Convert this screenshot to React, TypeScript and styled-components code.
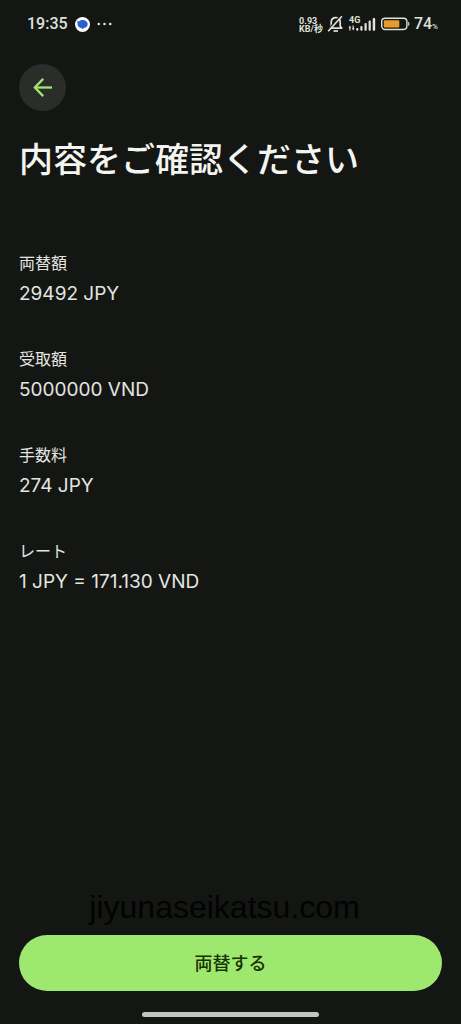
import React from "react";
import styled, { createGlobalStyle } from "styled-components";

const GlobalStyle = createGlobalStyle`
  *, *::before, *::after { box-sizing: border-box; }
  body {
    margin: 0;
    background: #141613;
    color: #e3e5e0;
    font-family: Inter, "Noto Sans CJK JP", sans-serif;
  }
`;

const Screen = styled.div`
  display: flex;
  flex-direction: column;
  min-height: 100vh;
`;

const StatusBar = styled.div`
  display: flex;
  align-items: center;
  justify-content: space-between;
  height: 48px;
  padding: 0 23px 0 27px;
  font-family: Roboto, "Noto Sans CJK JP", sans-serif;
  font-weight: 500;
  color: #dfe1dc;
`;

const StatusSide = styled.div<{ $gap: number }>`
  display: flex;
  align-items: center;
  gap: ${({ $gap }) => $gap}px;
`;

const StatusText = styled.span`
  display: flex;
  align-items: baseline;
  font-size: 16px;
  line-height: 20px;

  small {
    font-size: 8px;
    line-height: 8px;
  }
`;

const NetSpeed = styled.span`
  padding-top: 2px;
  font-size: 9px;
  line-height: 8px;
  font-weight: 700;
  white-space: nowrap;
`;

const SpeedLine = styled.span`
  display: block;
`;

const Main = styled.main`
  flex: 1;
  padding: 16px 19px 0;
`;

const BackButton = styled.button`
  display: flex;
  align-items: center;
  justify-content: center;
  width: 47px;
  height: 47px;
  padding: 0;
  border: 0;
  border-radius: 50%;
  background: #2b2d2a;
  color: #9fe870;
  cursor: pointer;
`;

const Title = styled.h1`
  margin: 24px 0 66px;
  font-size: 34px;
  line-height: 50px;
  font-weight: 500;
  color: #f3f5f0;
`;

const Details = styled.dl`
  display: flex;
  flex-direction: column;
  gap: 38px;
  margin: 0;
`;

const Detail = styled.div`
  display: flex;
  flex-direction: column;
  gap: 4px;
`;

const Label = styled.dt`
  font-size: 16px;
  line-height: 24px;
`;

const Value = styled.dd`
  margin: 0;
  font-size: 19px;
  line-height: 30px;
`;

const Footer = styled.footer`
  display: flex;
  flex-direction: column;
  padding: 0 19px 7px;
`;

const Watermark = styled.p`
  margin: 0;
  padding: 0 12px 8px 0;
  font-family: "Liberation Sans", sans-serif;
  font-size: 32px;
  line-height: 40px;
  text-align: center;
  color: #020302;
`;

const SubmitButton = styled.button`
  height: 56px;
  padding: 2px 0 0;
  border: 0;
  border-radius: 28px;
  background: #9fe870;
  color: #163300;
  font-family: inherit;
  font-size: 18px;
  font-weight: 500;
  line-height: 28px;
  cursor: pointer;
`;

const HomeBar = styled.div`
  align-self: center;
  width: 42%;
  height: 5px;
  margin-top: 21px;
  border-radius: 3px;
  background: #c3c5c0;
`;

const details = [
  { label: "両替額", value: "29492 JPY" },
  { label: "受取額", value: "5000000 VND" },
  { label: "手数料", value: "274 JPY" },
  { label: "レート", value: "1 JPY = 171.130 VND" },
];

const ChatIcon = () => (
  <svg width="15" height="15" viewBox="0 0 15 15" aria-hidden="true">
    <circle cx="7.5" cy="7.5" r="7.5" fill="#fff" />
    <path
      d="M1.900 4.200h2.200C5 3.400 6.200 3 7.500 3c3 0 5.200 1.700 5.200 4.100 0 2.100-1.500 3.600-3.700 4L7.500 12 6 11.100C3.900 10.700 2.600 9.300 2.600 7.300c0-1.200-.1-2-.7-3.100Z"
      fill="#2563cf"
    />
  </svg>
);

const DotsIcon = () => (
  <svg width="15" height="4" viewBox="0 0 15 4" fill="currentColor" aria-hidden="true">
    <circle cx="1.800" cy="2" r="1.300" />
    <circle cx="7.500" cy="2" r="1.300" />
    <circle cx="13.200" cy="2" r="1.300" />
  </svg>
);

const MutedBellIcon = () => (
  <svg
    width="17"
    height="18"
    viewBox="0 0 17 18"
    fill="none"
    stroke="currentColor"
    strokeWidth="1.700"
    aria-hidden="true"
  >
    <path d="M2.700 13.200h12l-1.500-2.200V7.400c0-2.700-1.800-4.700-4.500-4.700S4.200 4.700 4.200 7.400V11Z" strokeLinejoin="round" />
    <path d="M6.500 16h4.500" />
    <path d="M13.500.6 1 14.800" stroke="#141613" strokeWidth="1.500" />
    <path d="M14.900 1.200 1.200 16.200" />
  </svg>
);

const SignalIcon = () => (
  <svg width="28" height="16" viewBox="0 0 28 16" fill="currentColor" aria-hidden="true">
    <text x="1" y="7" fontFamily="Roboto, sans-serif" fontSize="9" fontWeight="700">
      4G
    </text>
    <path d="M1.900 9.500 3.300 11.700H2.500v2.800H1.300v-2.800H.5ZM5.200 14.500 3.800 12.300h.8V9.500h1.200v2.800h.8Z" />
    <rect x="8.200" y="12" width="2.200" height="2.700" rx=".9" />
    <rect x="12.300" y="10" width="2.200" height="4.700" rx=".9" />
    <rect x="16.500" y="7" width="2.200" height="7.700" rx=".9" />
    <rect x="20.600" y="4.500" width="2.200" height="10.200" rx=".9" />
    <rect x="24.700" y="2" width="2.500" height="12.700" rx=".9" />
  </svg>
);

const BatteryIcon = () => (
  <svg width="30" height="14" viewBox="0 0 30 14" aria-hidden="true">
    <rect x="1.700" y="1.200" width="25.200" height="11.300" rx="3.400" fill="none" stroke="currentColor" strokeWidth="1.400" />
    <rect x="3.800" y="3.200" width="15.500" height="7.300" rx="1.200" fill="#e99a2d" />
    <path d="M28.200 4.700c1.600.3 1.600 4 0 4.300Z" fill="currentColor" />
  </svg>
);

const ArrowLeftIcon = () => (
  <svg
    width="20"
    height="20"
    viewBox="0 0 20 20"
    fill="none"
    stroke="currentColor"
    strokeWidth="2.300"
    aria-hidden="true"
  >
    <path d="M19 9.500H2.300" />
    <path d="M10.200.9 1.900 9.500l8.300 8.600" />
  </svg>
);

export default function App() {
  return (
    <Screen>
      <GlobalStyle />
      <StatusBar>
        <StatusSide $gap={7}>
          <StatusText>19:35</StatusText>
          <ChatIcon />
          <DotsIcon />
        </StatusSide>
        <StatusSide $gap={4}>
          <NetSpeed>
            <SpeedLine>0.93</SpeedLine>
            <SpeedLine>KB/秒</SpeedLine>
          </NetSpeed>
          <MutedBellIcon />
          <SignalIcon />
          <BatteryIcon />
          <StatusText>
            74<small>%</small>
          </StatusText>
        </StatusSide>
      </StatusBar>
      <Main>
        <BackButton type="button" aria-label="戻る">
          <ArrowLeftIcon />
        </BackButton>
        <Title lang="ja">内容をご確認ください</Title>
        <Details lang="ja">
          {details.map(({ label, value }) => (
            <Detail key={label}>
              <Label>{label}</Label>
              <Value>{value}</Value>
            </Detail>
          ))}
        </Details>
      </Main>
      <Footer>
        <Watermark>jiyunaseikatsu.com</Watermark>
        <SubmitButton type="button" lang="ja">
          両替する
        </SubmitButton>
        <HomeBar />
      </Footer>
    </Screen>
  );
}
